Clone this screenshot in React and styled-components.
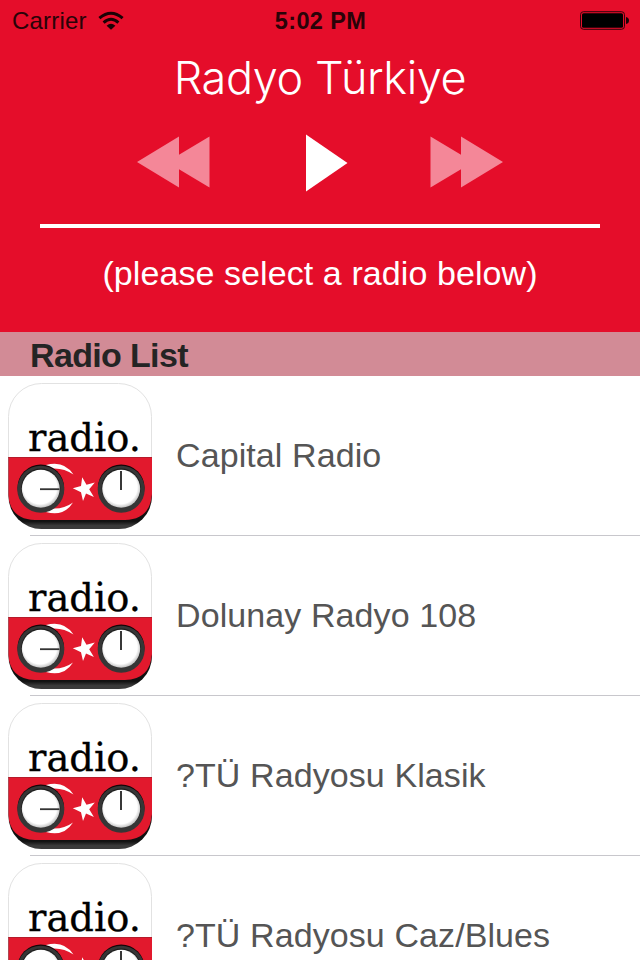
import React from 'react';
import styled, { createGlobalStyle } from 'styled-components';

const stations = [
  'Capital Radio',
  'Dolunay Radyo 108',
  '?TÜ Radyosu Klasik',
  '?TÜ Radyosu Caz/Blues',
];

const WifiIcon = () => (
  <svg width="26" height="20" viewBox="0 0 26 20">
    <g fill="none" stroke="#1a0205" strokeWidth="3">
      <path d="M1.4 7.2 Q13 -2.8 24.6 7.2" />
      <path d="M5.6 11.6 Q13 5 20.4 11.6" />
    </g>
    <path d="M8.6 14.8 Q13 10.8 17.4 14.8 L13 18.8 Z" fill="#1a0205" />
  </svg>
);

const BatteryIcon = () => (
  <svg width="50" height="20" viewBox="0 0 50 20">
    <rect x="1.5" y="0.7" width="44" height="17.6" rx="3" fill="none" stroke="#32040a" />
    <rect x="3" y="2.2" width="41" height="14.6" rx="1.6" fill="#000" />
    <path d="M47 6 Q50 6.5 50 9.5 Q50 12.5 47 13 Z" fill="#1a0205" />
  </svg>
);

const SkipIcon = ({ flip }) => (
  <svg width="73" height="52" viewBox="0 0 73 52">
    <path
      d="M0 26 L42 0.5 V18.7 L72.5 0.5 V51.5 L42 33.3 V51.5 Z"
      fill="#f48798"
      transform={flip ? 'translate(73 0) scale(-1 1)' : undefined}
    />
  </svg>
);

const PlayIcon = () => (
  <svg width="42" height="58" viewBox="0 0 42 58">
    <path d="M0 0.5 L41.5 29 L0 57.5 Z" fill="#fff" />
  </svg>
);

const Knob = ({ cx, cy, id, children }) => (
  <g>
    <circle cx={cx} cy={cy - 1} r="23.3" fill="#150608" />
    <circle cx={cx} cy={cy + 0.5} r="23.5" fill="#363636" />
    <circle cx={cx} cy={cy - 0.6} r="19.6" fill="#1c1c1c" />
    <circle cx={cx} cy={cy} r="19" fill={`url(#${id}-knob)`} />
    {children}
  </g>
);

const RadioLogo = ({ id }) => (
  <svg width="160" height="160" viewBox="0 0 160 160">
    <defs>
      <clipPath id={`${id}-clip`}>
        <rect x="8.5" y="7" width="143.5" height="146" rx="33" />
      </clipPath>
      <radialGradient id={`${id}-knob`} cx="0.48" cy="0.46" r="0.55">
        <stop offset="0.8" stopColor="#fff" />
        <stop offset="1" stopColor="#bcbcbc" />
      </radialGradient>
      <linearGradient id={`${id}-base`} x1="0" y1="0" x2="0" y2="1">
        <stop offset="0.88" stopColor="#111" />
        <stop offset="0.94" stopColor="#3a3a3a" />
      </linearGradient>
    </defs>
    <rect x="8.5" y="7.5" width="143" height="145" rx="33" fill="#fff" stroke="#e2e2e2" />
    <g clipPath={`url(#${id}-clip)`}>
      <rect x="8" y="81" width="144" height="73" fill={`url(#${id}-base)`} />
      <path d="M8 81 H152 V118 Q150 143.5 125 144 H35 Q10 143.5 8 118 Z" fill="#e2192d" />
      <rect x="8" y="81" width="144" height="1" fill="#b51b2b" />
    </g>
    <path
      d="M46 89 Q64 84 73.5 98.5 Q62 90.5 48 93 Z M46 136 Q64 141 73 126.5 Q62 134.5 48 132 Z"
      fill="#fff"
    />
    <path
      d="M72.8 112.3 L81 110 L82.2 101.3 L86.5 108.8 L94.8 106.5 L89.2 113.3 L93.9 121 L86 117.6 L83 125 L81 116.3 Z"
      fill="#fff"
    />
    <Knob cx={40.8} cy={112.7} id={id}>
      <path d="M40 113.2 H59.5" stroke="#333" strokeWidth="1.8" />
    </Knob>
    <Knob cx={121.2} cy={112.7} id={id}>
      <path d="M121 95 V114" stroke="#222" strokeWidth="1.8" />
    </Knob>
    <LogoText x="28" y="75" textLength="113" lengthAdjust="spacingAndGlyphs">
      radio.
    </LogoText>
  </svg>
);

const App = () => {
  return (
    <>
      <GlobalStyle />
      <Screen>
        <Player>
          <StatusBar>
            <Carrier>
              Carrier
              <WifiIcon />
            </Carrier>
            <Time>5:02 PM</Time>
            <BatteryWrap>
              <BatteryIcon />
            </BatteryWrap>
          </StatusBar>
          <Title>Radyo Türkiye</Title>
          <Controls>
            <ControlButton aria-label="Previous">
              <SkipIcon />
            </ControlButton>
            <ControlButton aria-label="Play" $main>
              <PlayIcon />
            </ControlButton>
            <ControlButton aria-label="Next">
              <SkipIcon flip />
            </ControlButton>
          </Controls>
          <Divider />
          <Hint>(please select a radio below)</Hint>
        </Player>
        <SectionHeader>Radio List</SectionHeader>
        <List>
          {stations.map((name, index) => (
            <Station key={name}>
              <RadioLogo id={`station-${index}`} />
              <StationName>{name}</StationName>
            </Station>
          ))}
        </List>
      </Screen>
    </>
  );
};

export default App;

const GlobalStyle = createGlobalStyle`
  * {
    box-sizing: border-box;
  }
  body {
    margin: 0;
    overflow: hidden;
    font-family: 'Liberation Sans', sans-serif;
  }
  svg {
    display: block;
    flex-shrink: 0;
  }
`;

const Screen = styled.div`
  width: 640px;
  height: 960px;
  overflow: hidden;
  display: flex;
  flex-direction: column;
  background-color: #fff;
`;

const Player = styled.header`
  height: 332px;
  flex-shrink: 0;
  display: flex;
  flex-direction: column;
  background-color: #e50d2a;
  color: white;
`;

const StatusBar = styled.div`
  height: 40px;
  padding: 0 11px 0 12px;
  display: grid;
  grid-template-columns: 1fr auto 1fr;
  align-items: center;
  color: #2a0308;
`;

const Carrier = styled.div`
  display: flex;
  align-items: center;
  gap: 11px;
  padding-top: 1px;
  font-size: 24px;
  letter-spacing: 0.2px;
`;

const Time = styled.div`
  padding-top: 2px;
  font-size: 23.5px;
  font-weight: bold;
  letter-spacing: 0.4px;
`;

const BatteryWrap = styled.div`
  display: flex;
  justify-content: flex-end;
  padding-top: 1px;
`;

const Title = styled.h1`
  margin: 0;
  height: 75px;
  line-height: 75px;
  text-align: center;
  font-family: Inter, 'Liberation Sans', sans-serif;
  font-size: 45px;
  font-weight: 300;
  letter-spacing: -0.4px;
`;

const Controls = styled.div`
  height: 109px;
  padding: 18px 137px 0;
  display: flex;
  justify-content: space-between;
`;

const ControlButton = styled.button`
  height: ${({ $main }) => ($main ? '60px' : '57px')};
  padding: 0;
  margin-left: ${({ $main }) => ($main ? '14px' : '0')};
  display: flex;
  align-items: center;
  border: none;
  background: none;
  cursor: pointer;
`;

const Divider = styled.div`
  height: 4px;
  margin: 0 40px;
  background-color: white;
`;

const Hint = styled.p`
  margin: 25px 0 0;
  line-height: 40px;
  text-align: center;
  font-size: 34px;
  letter-spacing: 0.08px;
`;

const SectionHeader = styled.h2`
  height: 44px;
  flex-shrink: 0;
  margin: 0;
  padding: 1px 30px 0;
  line-height: 44px;
  background-color: #d28b96;
  color: #242424;
  font-size: 34px;
  font-weight: bold;
  letter-spacing: -0.65px;
`;

const List = styled.ul`
  margin: 0;
  padding: 0;
  list-style: none;
`;

const Station = styled.li`
  height: 160px;
  display: flex;
  align-items: center;
  gap: 16px;
  background: linear-gradient(#c8c7cc, #c8c7cc) 30px 159px / 100% 1px no-repeat;
`;

const StationName = styled.span`
  padding-bottom: 2px;
  color: #555;
  font-size: 34px;
  letter-spacing: 0.09px;
`;

const LogoText = styled.text`
  fill: #000;
  stroke: #000;
  stroke-width: 0.3px;
  font-family: 'DejaVu Serif', 'Liberation Serif', serif;
  font-size: 39px;
`;
